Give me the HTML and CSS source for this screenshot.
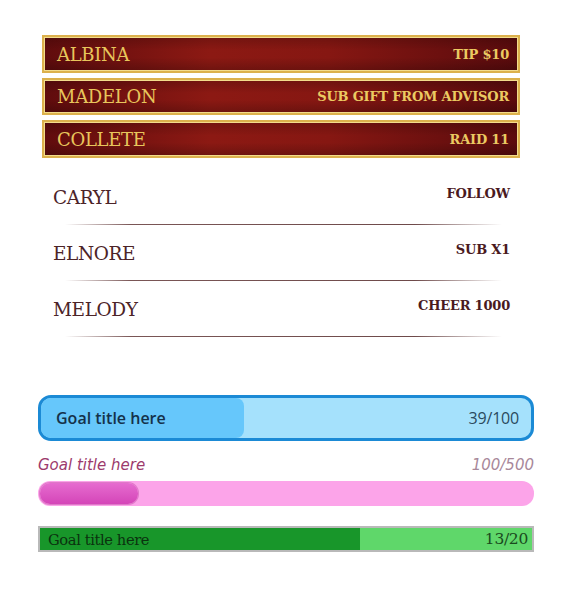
FILE: index.html
```html
<!DOCTYPE html>
<html>
<head>
<meta charset="utf-8">
<link rel="stylesheet" href="styles.css">
</head>
<body>
<div class="page">
  <div class="alerts">
    <div class="alert"><span class="a-name">ALBINA</span><span class="a-event">TIP $10</span></div>
    <div class="alert"><span class="a-name">MADELON</span><span class="a-event">SUB GIFT FROM ADVISOR</span></div>
    <div class="alert"><span class="a-name">COLLETE</span><span class="a-event">RAID 11</span></div>
  </div>
  <div class="rows">
    <div class="row"><span class="r-name">CARYL</span><span class="r-event">FOLLOW</span></div>
    <div class="row"><span class="r-name">ELNORE</span><span class="r-event">SUB X1</span></div>
    <div class="row"><span class="r-name">MELODY</span><span class="r-event">CHEER 1000</span></div>
  </div>
  <div class="goals">
    <div class="goal-blue">
      <div class="gb-fill" style="width:41.5%"></div>
      <span class="gb-title">Goal title here</span>
      <span class="gb-count">39/100</span>
    </div>
    <div class="goal-pink">
      <div class="gp-head"><span>Goal title here</span><span class="gp-count">100/500</span></div>
      <div class="gp-bar"><div class="gp-fill" style="width:20%"></div></div>
    </div>
    <div class="goal-green">
      <div class="gg-fill" style="width:65%"></div>
      <span class="gg-title">Goal title here</span>
      <span class="gg-count">13/20</span>
    </div>
  </div>
</div>
</body>
</html>
```
FILE: styles.css
```css
* { box-sizing: border-box; }
body { margin: 0; background: #fff; }
.page { width: 569px; height: 590px; padding: 35px 0 0 0; }

.alerts { display: flex; flex-direction: column; gap: 5px; margin: 0 49px 0 42px; }
.alert {
  height: 38px;
  display: flex; align-items: center; justify-content: space-between;
  padding: 0 9px 0 13px;
  border: 2px solid #dcb14c;
  box-shadow: 0 0 0 1px #f3dc8c inset;
  background:
    linear-gradient(to bottom, rgba(0,0,0,0.18), rgba(0,0,0,0) 40%, rgba(0,0,0,0) 60%, rgba(0,0,0,0.22)),
    linear-gradient(to right, #600c0d, #8c1913 35%, #861712 60%, #5a0b0d);
}
.alert:nth-child(2) { height: 37px; }
.a-name { font-family: "DejaVu Serif", serif; font-size: 18px; color: #e8c65c; letter-spacing: -0.3px; }
.a-event { font-family: "DejaVu Serif", serif; font-weight: bold; font-size: 13px; color: #ebca62; letter-spacing: -0.2px; }

.rows { margin: 11px 59px 0 53px; }
.row {
  position: relative;
  height: 56px;
  display: flex; align-items: center; justify-content: space-between;
}
.row::after {
  content: ""; position: absolute; left: 12px; right: 8px; bottom: 0; height: 1px;
  background: linear-gradient(to right, rgba(90,50,50,0), #7a5656 15%, #6e4a4a 80%, rgba(90,50,50,0));
}
.r-name { font-family: "DejaVu Serif", serif; font-size: 18.5px; color: #4c2428; letter-spacing: -0.4px; }
.r-event { font-family: "DejaVu Serif", serif; font-weight: bold; font-size: 13px; color: #4a1a1e; letter-spacing: -0.2px; margin-bottom: 7px; }

.goals { margin: 58px 35px 0 38px; }
.goal-blue {
  position: relative; height: 46px;
  border: 3px solid #1b8ad5; border-radius: 13px;
  background: #a5e1fc;
  display: flex; align-items: center; justify-content: space-between;
  padding: 0 12px 0 15px; overflow: hidden;
}
.gb-fill { position: absolute; left: 0; top: 0; bottom: 0; background: #66c7fb; border-radius: 0 8px 8px 0; }
.gb-title { position: relative; font-family: "Open Sans", sans-serif; font-weight: 600; font-size: 16px; color: #14314a; letter-spacing: 0; }
.gb-count { position: relative; font-family: "Open Sans", sans-serif; font-size: 16px; color: #2a4a5e; letter-spacing: -0.2px; }

.goal-pink { margin-top: 14px; }
.gp-head {
  display: flex; justify-content: space-between;
  font-family: "DejaVu Sans", sans-serif; font-style: italic; font-size: 15px;
  color: #9c3a6c; height: 20px; line-height: 20px;
}
.gp-count { color: #a8889a; }
.gp-bar { margin-top: 6px; height: 25px; border-radius: 12px; background: #fca4e9; padding: 2px; }
.gp-fill {
  height: 21px; border-radius: 10px;
  background: linear-gradient(to bottom, #e66ccf, #d445b8);
  box-shadow: 0 0 0 1px rgba(170,40,140,0.35);
}

.goal-green {
  position: relative; margin-top: 20px; height: 26px;
  border: 2px solid #b9b9b9;
  background: #5fd76a;
  display: flex; align-items: center; justify-content: space-between;
  padding: 0 4px 0 8px;
}
.gg-fill { position: absolute; left: 0; top: 0; bottom: 0; background: #18962a; }
.gg-title { position: relative; font-family: "DejaVu Serif", serif; font-size: 14.7px; color: #0b320f; letter-spacing: -0.4px; }
.gg-count { position: relative; font-family: "DejaVu Serif", serif; font-size: 15.5px; color: #1a4a1e; letter-spacing: -0.3px; }
```
